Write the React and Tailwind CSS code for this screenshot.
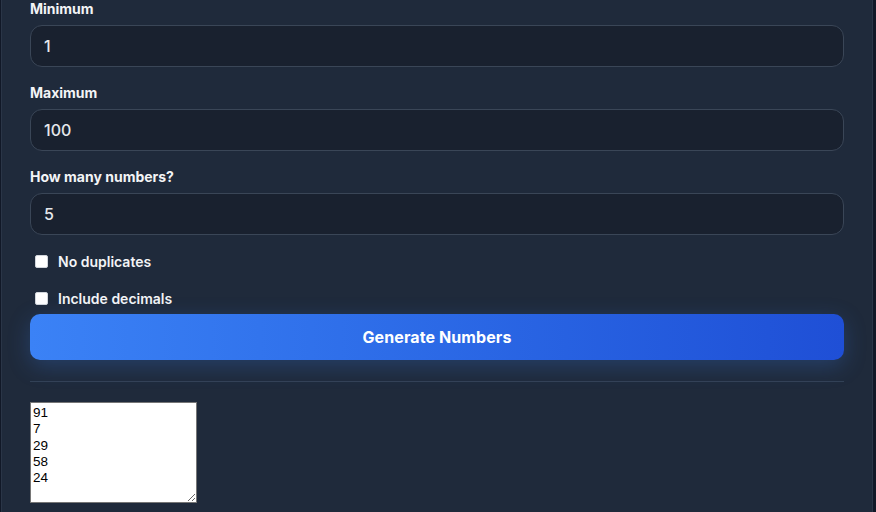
import { useState } from 'react';

function Field({ label, value, onChange }) {
  return (
    <div className="mb-4">
      <label className="block text-[14px] font-bold leading-5 text-[#f3f4f6] mb-1.5">
        {label}
      </label>
      <input
        type="text"
        value={value}
        onChange={e => onChange(e.target.value)}
        className="w-full h-[42px] px-[13px] rounded-xl border border-[#3a4657] bg-[#19212f] text-[16px] font-medium text-[#e5e7eb] outline-none"
      />
    </div>
  );
}

function Check({ label, checked, onChange, className }) {
  return (
    <label className={`flex items-center h-5 gap-[10px] pl-[5px] ${className}`}>
      <input
        type="checkbox"
        checked={checked}
        onChange={e => onChange(e.target.checked)}
        className="appearance-none w-[13px] h-[13px] rounded-[2px] bg-white border border-[#d1d5db]"
      />
      <span className="text-[14px] font-semibold text-[#f3f4f6]">{label}</span>
    </label>
  );
}

export default function App() {
  const [min, setMin]         = useState('1');
  const [max, setMax]         = useState('100');
  const [count, setCount]     = useState('5');
  const [noDupes, setNoDupes] = useState(false);
  const [decimals, setDecimals] = useState(false);

  return (
    <main className="min-h-screen bg-[#111827] font-['Inter',sans-serif]">
      <div className="ml-[1px] w-[872px] min-h-[512px] bg-[#1f2a3b] border-x border-[#2a3547] px-7 -mt-[1px] pb-6">

        <Field label="Minimum" value={min} onChange={setMin} />
        <Field label="Maximum" value={max} onChange={setMax} />
        <Field label="How many numbers?" value={count} onChange={setCount} />

        {/* Options */}
        <Check label="No duplicates" checked={noDupes} onChange={setNoDupes} className="mt-0" />
        <Check label="Include decimals" checked={decimals} onChange={setDecimals} className="mt-[17px]" />

        <button
          className="w-full mt-[6px] h-[46px] rounded-[10px] bg-gradient-to-r from-[#3b82f6] to-[#1f4fd6] text-white text-[16px] font-bold tracking-[0.1px] shadow-[0_6px_22px_rgba(59,130,246,0.25)]"
        >
          Generate Numbers
        </button>

        <div className="h-px bg-[#334155] mt-[21px] mb-5" />

        <textarea
          readOnly
          value={'91\n7\n29\n58\n24'}
          className="block w-[167px] h-[101px] pt-[2px] px-[2px] bg-white text-black border border-[#767676] font-['Liberation_Sans',Arial,sans-serif] text-[13.5px] leading-[16.3px]"
        />
      </div>
    </main>
  );
}
